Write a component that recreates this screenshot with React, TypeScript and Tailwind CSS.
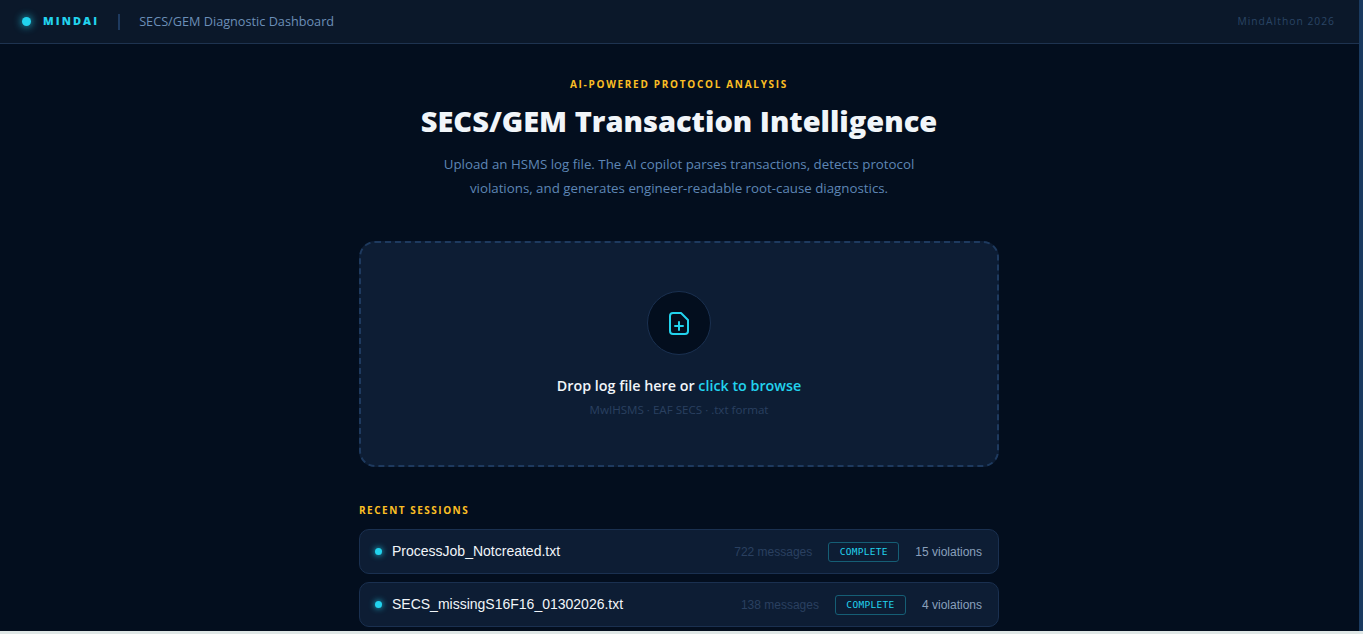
const uiFont = "font-['Open_Sans','Noto_Sans',sans-serif]";

const sessions = [
  { name: "ProcessJob_Notcreated.txt", messages: 722, violations: 15 },
  { name: "SECS_missingS16F16_01302026.txt", messages: 138, violations: 4 },
];

function SessionRow({ name, messages, violations }: { name: string; messages: number; violations: number }) {
  return (
    <div className="flex h-[45px] items-center rounded-[10px] border border-[#1a3050] bg-[#0d1d34] pl-[15px] pr-[16px] font-['Liberation_Sans',sans-serif]">
      <span className="h-[7px] w-[7px] rounded-full bg-[#22d3ee] shadow-[0_0_6px_#22d3ee]" />
      <span className="ml-[10px] text-[14px] text-[#f1f5f9]">{name}</span>
      <span className="ml-auto text-[12px] text-[#2a4060]">{messages} messages</span>
      <span className="ml-[16px] w-[71px] rounded-[3px] border border-[#155e75] py-[2px] text-center font-['DejaVu_Sans_Mono',monospace] text-[9.5px] leading-[14px] tracking-[0.3px] text-[#22d3ee]">
        COMPLETE
      </span>
      <span className="ml-[16px] text-[12px] text-[#8aa0bc]">{violations} violations</span>
    </div>
  );
}

export default function App() {
  return (
    <div className={`flex h-[634px] w-full flex-col overflow-hidden bg-[#030e1e] ${uiFont}`}>
      <div className="flex min-h-0 flex-1">
        <div className="min-w-0 flex-1 pr-px">
          <header className="-mr-px flex h-[44px] items-center border-b border-[#1e3350] bg-[#0b182a] pl-[22px] pr-[24px]">
            <span className="h-[9px] w-[9px] rounded-full bg-[#22d3ee] shadow-[0_0_8px_#22d3ee]" />
            <span className="ml-[12px] text-[11px] font-extrabold tracking-[2.1px] text-[#22d3ee]">MINDAI</span>
            <span className="ml-[19px] h-[16px] w-[2px] bg-[#1e3a5f]" />
            <span className="ml-[19px] text-[12.7px] font-medium text-[#6b8fb8]">SECS/GEM Diagnostic Dashboard</span>
            <span className="ml-auto text-[10.3px] tracking-[1px] text-[#2a4565]">MindAIthon 2026</span>
          </header>
          <main className="mx-auto w-[640px] pt-[33px]">
            <div className="text-center text-[10px] font-bold leading-[14px] tracking-[1.7px] text-[#fbbf24]">
              AI-POWERED PROTOCOL ANALYSIS
            </div>
            <h1 className="mt-[10px] text-center text-[29px] font-extrabold leading-[40px] text-[#f1f5f9]">
              SECS/GEM Transaction Intelligence
            </h1>
            <p className="mx-auto mt-[11px] w-[510px] text-center text-[13.3px] leading-[24px] text-[#5e86b5]">
              Upload an HSMS log file. The AI copilot parses transactions, detects protocol violations, and generates
              engineer-readable root-cause diagnostics.
            </p>
            <div className="mt-[41px] flex h-[226px] flex-col items-center rounded-[16px] border-2 border-dashed border-[#1e3a5f] bg-[#0d1d34] pt-[48px]">
              <div className="flex h-[64px] w-[64px] items-center justify-center rounded-full border border-[#1a3050] bg-[#030e1e]">
                <svg width="20" height="23" viewBox="0 0 20 23" fill="none" stroke="#22d3ee" strokeWidth="2" strokeLinecap="round" strokeLinejoin="round">
                  <path d="M4 1h8l7 7V19a3 3 0 0 1-3 3H4a3 3 0 0 1-3-3V4a3 3 0 0 1 3-3z" />
                  <path d="M10 10v8M6 14h8" />
                </svg>
              </div>
              <div className="mt-[21px] text-[14.3px] font-semibold leading-[20px] text-[#f1f5f9]">
                Drop log file here or <span className="text-[#22d3ee]">click to browse</span>
              </div>
              <div className="mt-[6px] text-[11.6px] leading-[16px] text-[#2a4060]">MwIHSMS · EAF SECS · .txt format</div>
            </div>
            <div className="mt-[36px] text-[10px] font-bold leading-[14px] tracking-[1.5px] text-[#fbbf24]">RECENT SESSIONS</div>
            <div className="mt-[12px] flex flex-col gap-[8px]">
              {sessions.map((s) => (
                <SessionRow key={s.name} {...s} />
              ))}
            </div>
          </main>
        </div>
        <div className="w-[4px] bg-[#1a3a5f]" />
      </div>
      <div className="h-[3px] shrink-0 bg-[#dfe7e6]" />
    </div>
  );
}
